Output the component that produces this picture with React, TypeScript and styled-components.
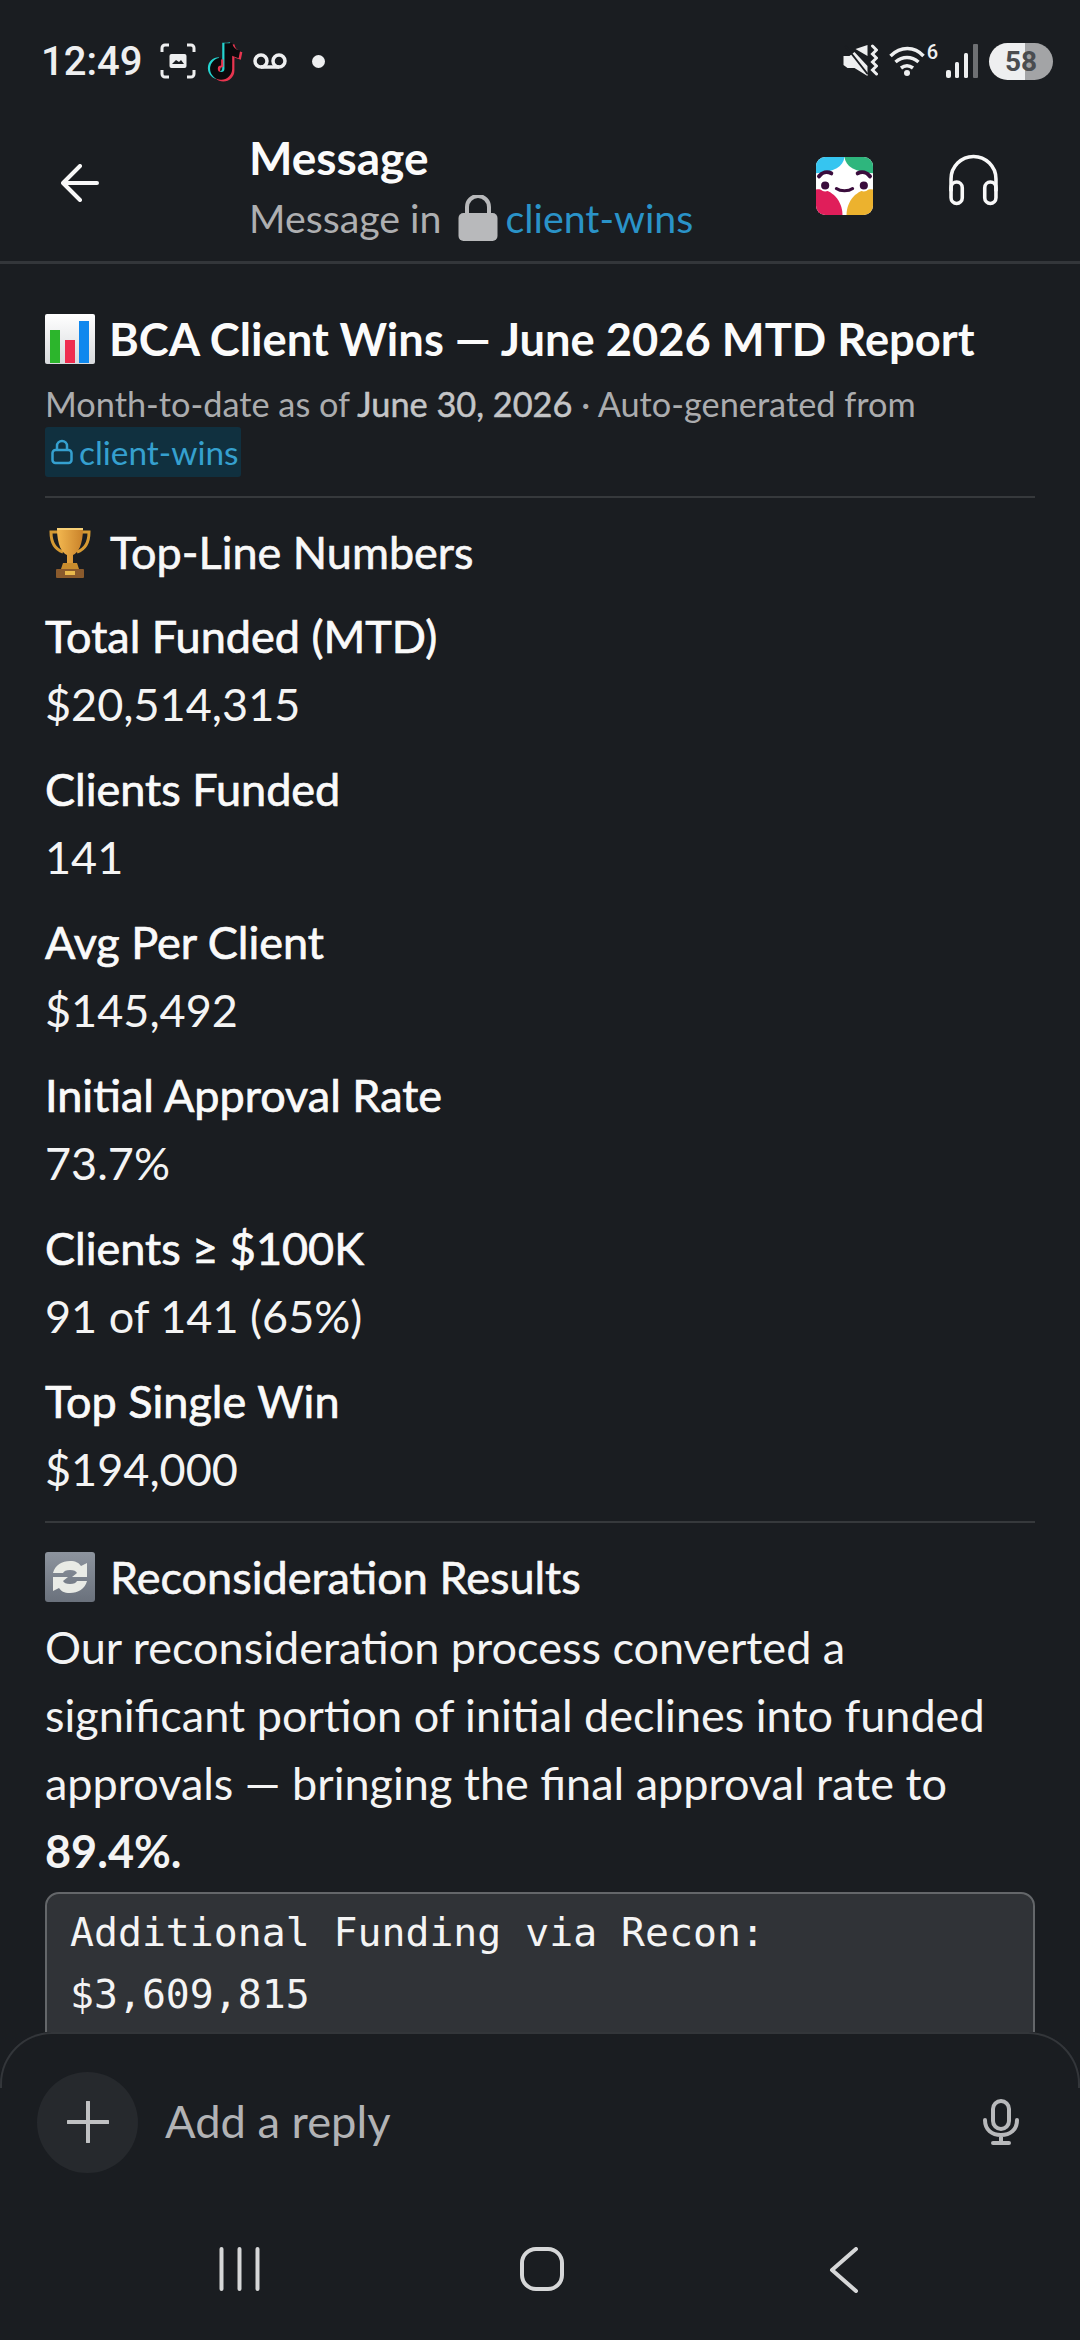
import React from 'react';
import styled, { createGlobalStyle } from 'styled-components';

const GlobalStyle = createGlobalStyle`
  html, body {
    margin: 0;
    padding: 0;
    background: #1a1d21;
  }
  * {
    box-sizing: border-box;
  }
`;

const Page = styled.div`
  display: flex;
  flex-direction: column;
  width: 1080px;
  height: 2340px;
  overflow: hidden;
  background: #1a1d21;
  color: #f8f8f8;
  font-family: Lato, 'Liberation Sans', sans-serif;
  font-feature-settings: 'liga' 1;
`;

const StatusBar = styled.div`
  display: flex;
  justify-content: space-between;
  align-items: center;
  flex: none;
  height: 122px;
  padding: 0 27px 0 41px;
  color: #eeeff0;
`;

const StatusGroup = styled.div`
  display: flex;
  align-items: center;
`;

const WifiGroup = styled(StatusGroup)`
  height: 32px;
  margin-left: 10px;
`;

const Clock = styled.span`
  font-family: Roboto, sans-serif;
  font-size: 40px;
  font-weight: 500;
  margin-right: 18px;
`;

const Dot = styled.span`
  width: 13px;
  height: 13px;
  margin-left: 25px;
  border-radius: 50%;
  background: #eeeff0;
`;

const WifiLevel = styled.span`
  align-self: flex-start;
  margin: -3px 0 0 1px;
  font-family: Roboto, sans-serif;
  font-size: 20px;
  font-weight: 500;
  line-height: 20px;
`;

const Battery = styled.div`
  display: flex;
  align-items: center;
  justify-content: center;
  width: 64px;
  height: 37px;
  margin-left: 10px;
  border-radius: 19px;
  background: linear-gradient(90deg, #eeeff0 0 57%, #a3a4a6 57% 100%);
  color: #4a4c4f;
  font-family: Roboto, sans-serif;
  font-size: 28px;
  font-weight: 700;
`;

const StatusIcon = styled.svg<{ $left: number }>`
  flex: none;
  margin-left: ${(p) => p.$left}px;
`;

const Header = styled.header`
  display: flex;
  align-items: flex-start;
  flex: none;
  height: 142px;
  padding: 6px 82px 0 61px;
  border-bottom: 3px solid #33363a;
`;

const BackButton = styled.div`
  display: flex;
  flex: none;
  width: 188px;
  margin-top: 36px;
`;

const HeaderText = styled.div`
  flex: 1;
  display: flex;
  flex-direction: column;
`;

const HeaderTitle = styled.div`
  font-size: 46px;
  font-weight: 700;
  line-height: 60px;
  color: #fbfbfb;
`;

const HeaderSub = styled.div`
  display: flex;
  align-items: center;
  font-size: 39.3px;
  line-height: 60px;
  color: #aeafb1;
`;

const HeaderLink = styled.span`
  color: #2a93c8;
`;

const HeaderLock = styled.svg`
  margin: 0 7px 0 17px;
`;

const HeaderActions = styled.div`
  display: flex;
  align-items: flex-start;
  gap: 76px;
  margin-top: 26px;
`;

const FaceSlot = styled.div`
  display: flex;
  margin-top: 3px;
`;

const Content = styled.main`
  flex: 1;
  min-height: 0;
  overflow: hidden;
  padding: 45px 45px 0;
`;

const Title = styled.h1`
  display: flex;
  align-items: center;
  gap: 14px;
  margin: 0;
  font-size: 45.3px;
  font-weight: 700;
  line-height: 60px;
  color: #fbfbfb;
`;

const Meta = styled.div`
  margin-top: 12px;
  font-size: 34.3px;
  line-height: 46px;
  color: #abacae;
`;

const MetaStrong = styled.span`
  font-weight: 400;
  -webkit-text-stroke: 0.5px currentColor;
  color: #c4c5c7;
`;

const ChannelMention = styled.span`
  display: inline-flex;
  align-items: center;
  gap: 6px;
  height: 50px;
  padding: 0 2px 0 6px;
  border-radius: 3px;
  background: #10303f;
  color: #35a0cf;
  font-size: 33.4px;
`;

const Divider = styled.hr<{ $top: number }>`
  height: 2px;
  margin: ${(p) => p.$top}px 0 0;
  border: none;
  background: #36393c;
`;

const SectionTitle = styled.h2`
  display: flex;
  align-items: center;
  gap: 15px;
  margin: 24px 0 0;
  font-size: 45px;
  font-weight: 400;
  -webkit-text-stroke: 0.6px currentColor;
  line-height: 60px;
  color: #f8f8f8;
`;

const Field = styled.div`
  margin-top: 23px;
`;

const FieldLabel = styled.div`
  font-size: 45px;
  font-weight: 400;
  -webkit-text-stroke: 0.7px currentColor;
  line-height: 62px;
  color: #fafafa;
`;

const FieldValue = styled.div`
  margin-top: 6px;
  font-size: 45px;
  line-height: 62px;
  color: #f4f4f4;
`;

const Paragraph = styled.p`
  margin: 6px 0 0;
  font-size: 45px;
  line-height: 68px;
  color: #f4f4f4;
`;

const CodeBlock = styled.pre`
  margin: 7px 0 0;
  height: 300px;
  padding: 7px 23px;
  border: 2px solid #64676a;
  border-radius: 14px;
  background: #303337;
  color: #f4f4f4;
  font-family: 'DejaVu Sans Mono', monospace;
  font-size: 39.8px;
  line-height: 62px;
`;

const Composer = styled.div`
  position: relative;
  display: flex;
  align-items: center;
  flex: none;
  height: 178px;
  padding: 2px 61px 0 37px;
  border-radius: 52px 52px 0 0;
  background: #1a1d21;

  /* the outline only follows the top edge and the two corners */
  &::before {
    content: '';
    position: absolute;
    top: 0;
    left: 0;
    right: 0;
    height: 54px;
    border: 2px solid #33363a;
    border-bottom: none;
    border-radius: 52px 52px 0 0;
  }
`;

const PlusButton = styled.div`
  display: flex;
  align-items: center;
  justify-content: center;
  flex: none;
  width: 101px;
  height: 101px;
  border-radius: 50%;
  background: #26292d;
`;

const Placeholder = styled.div`
  flex: 1;
  margin: -3px 0 0 27px;
  font-size: 45.3px;
  color: #b2b3b5;
`;

const NavBar = styled.nav`
  display: flex;
  justify-content: space-between;
  align-items: flex-start;
  flex: none;
  height: 130px;
  padding: 37px 221px 0 218px;
`;

const NavHome = styled.svg`
  margin-right: 6px;
`;

const Emoji = styled.svg`
  flex: none;
`;

function ChartEmoji() {
  return (
    <Emoji width="50" height="50" viewBox="0 0 50 50">
      <defs>
        <linearGradient id="chartBg" x1="0" y1="0" x2="0" y2="1">
          <stop offset="0" stopColor="#ffffff" />
          <stop offset="1" stopColor="#d8dadd" />
        </linearGradient>
      </defs>
      <rect width="50" height="50" rx="2" fill="url(#chartBg)" />
      <rect x="5" y="16" width="10" height="33" fill="#2cb52c" />
      <rect x="20" y="26" width="10" height="23" fill="#ef2d50" />
      <rect x="34" y="7" width="10" height="42" fill="#0f88ee" />
    </Emoji>
  );
}

function TrophyEmoji() {
  return (
    <Emoji width="50" height="52" viewBox="0 0 50 52">
      <defs>
        <linearGradient id="cup" x1="0" y1="0" x2="1" y2="0">
          <stop offset="0" stopColor="#f3b850" />
          <stop offset="1" stopColor="#c9822a" />
        </linearGradient>
      </defs>
      <path d="M14 6H6c0 10 3 17 12 20M36 6h8c0 10-3 17-12 20" fill="none" stroke="#d69a33" strokeWidth="3" />
      <path d="M12 2h26c0 17-5 25-10 27v8h-6v-8C17 27 12 19 12 2z" fill="url(#cup)" />
      <path d="M12 2h26v2H12z" fill="#f8d077" />
      <path d="M18 37h14l2 6H16z" fill="#c98d2d" />
      <rect x="11" y="43" width="28" height="9" rx="1" fill="#8a5a2c" />
      <rect x="20" y="45" width="10" height="4" fill="#e9b94c" />
    </Emoji>
  );
}

function RefreshEmoji() {
  return (
    <Emoji width="50" height="50" viewBox="0 0 50 50">
      <defs>
        <linearGradient id="refreshBg" x1="0" y1="0" x2="0" y2="1">
          <stop offset="0" stopColor="#8d949e" />
          <stop offset="1" stopColor="#6a717c" />
        </linearGradient>
      </defs>
      <rect width="50" height="50" rx="3" fill="url(#refreshBg)" />
      <path d="M8 21c2-8 9-12 17-12 6 0 9 2 11 5l6-3v14H27l5-4c-1-2-3-3-7-3-4 0-6 1-7 3z" fill="#e9ebe6" />
      <path d="M42 29c-2 8-9 12-17 12-6 0-9-2-11-5l-6 3V25h15l-5 4c1 2 3 3 7 3 4 0 6-1 7-3z" fill="#e9ebe6" />
    </Emoji>
  );
}

function SlackFace() {
  return (
    <svg width="57" height="58" viewBox="0 0 56 57">
      <defs>
        <clipPath id="faceClip">
          <rect width="56" height="57" rx="9" />
        </clipPath>
      </defs>
      <g clipPath="url(#faceClip)">
        <rect width="56" height="57" fill="#ffffff" />
        <path d="M0 0h28C27 9 18 15 0 16z" fill="#36c5f0" />
        <path d="M56 0H28c1 9 10 15 28 16z" fill="#2eb67d" />
        <path d="M0 57V32c14-2 26 10 26 25z" fill="#e01e5a" />
        <path d="M56 57V32c-14-2-26 10-26 25z" fill="#ecb22e" />
        <path d="M3 19c3-4 8-5 12-3" fill="none" stroke="#3a0c3c" strokeWidth="4" strokeLinecap="round" />
        <path d="M53 19c-3-4-8-5-12-3" fill="none" stroke="#3a0c3c" strokeWidth="4" strokeLinecap="round" />
        <circle cx="9" cy="28" r="5" fill="#3a0c3c" stroke="#fff" strokeWidth="2" />
        <circle cx="47" cy="28" r="5" fill="#3a0c3c" stroke="#fff" strokeWidth="2" />
        <path d="M20 31c4 3 12 3 16 0" fill="none" stroke="#3a0c3c" strokeWidth="3" strokeLinecap="round" />
      </g>
    </svg>
  );
}

const noteD = 'M20 3v23a6.500 6.500 0 1 1-6.500-6.500M20 3c1 6 5 9 10 10';

function App(): React.ReactElement {
  return (
    <Page>
      <GlobalStyle />
      <StatusBar>
        <StatusGroup>
          <Clock>12:49</Clock>
          <svg width="36" height="36" viewBox="0 0 36 36" fill="none" stroke="#eeeff0" strokeWidth="3">
            <path d="M9 2H5a3 3 0 0 0-3 3v4M27 2h4a3 3 0 0 1 3 3v4M9 34H5a3 3 0 0 1-3-3v-4M27 34h4a3 3 0 0 0 3-3v-4" />
            <rect x="9.500" y="11" width="17" height="14" rx="2" fill="#eeeff0" stroke="none" />
            <path d="M12 21l4-4 3 2 2-2 3 4z" fill="#1a1d21" stroke="none" />
          </svg>
          <StatusIcon $left={10} width="38" height="42" viewBox="0 0 34 38" fill="none" strokeWidth="7">
            <path d={noteD} stroke="#25d4d0" transform="translate(-2 -0.500)" />
            <path d={noteD} stroke="#e8354f" transform="translate(2 1.500)" />
            <path d={noteD} stroke="#0a0a0c" />
          </StatusIcon>
          <StatusIcon $left={9} width="34" height="18" viewBox="0 0 34 18" fill="none" stroke="#eeeff0" strokeWidth="3.500">
            <circle cx="8" cy="9" r="6" />
            <circle cx="26" cy="9" r="6" />
            <path d="M8 15h18" />
          </StatusIcon>
          <Dot />
        </StatusGroup>
        <StatusGroup>
          <svg width="35" height="34" viewBox="0 0 34 34" fill="#eeeff0">
            <path d="M0 12h6l5-4 13 14v10L11 24H4l-4-3z" />
            <path d="M12 5l12-4v11z" />
            <path d="M2 2l22 28" stroke="#1a1d21" strokeWidth="2" />
            <path d="M29 2l4 4-4 4 4 4-4 4 4 4-4 4 4 4" fill="none" stroke="#eeeff0" strokeWidth="3" strokeLinecap="round" />
          </svg>
          <WifiGroup>
            <svg width="38" height="32" viewBox="0 0 36 32" fill="none" stroke="#eeeff0" strokeWidth="3.500">
              <path d="M1.500 11c10-10 24-10 33 0" />
              <path d="M6.500 17c7-6 16-6 23 0" />
              <path d="M12 23c4-3 8-3 12 0" />
              <circle cx="18" cy="28" r="3" fill="#eeeff0" stroke="none" />
            </svg>
            <WifiLevel>6</WifiLevel>
          </WifiGroup>
          <StatusIcon $left={8} width="33" height="34" viewBox="0 0 33 34">
            <rect x="0" y="26" width="5" height="8" rx="2" fill="#eeeff0" />
            <rect x="9" y="18" width="4" height="16" rx="1.500" fill="#eeeff0" />
            <rect x="18" y="9" width="4" height="25" rx="1.500" fill="#eeeff0" />
            <rect x="27" y="0" width="5" height="34" rx="1" fill="#6e7073" />
          </StatusIcon>
          <Battery>58</Battery>
        </StatusGroup>
      </StatusBar>

      <Header>
        <BackButton>
          <svg width="38" height="38" viewBox="0 0 38 38" fill="none" stroke="#f8f8f8" strokeWidth="4" strokeLinecap="round" strokeLinejoin="round">
            <path d="M36 19H3M19 2L2 19l17 17" />
          </svg>
        </BackButton>
        <HeaderText>
          <HeaderTitle>Message</HeaderTitle>
          <HeaderSub>
            Message in
            <HeaderLock width="40" height="46" viewBox="0 0 40 46">
              <path d="M9 20v-8a11 11 0 0 1 22 0v8" fill="none" stroke="#b8b9bb" strokeWidth="4" />
              <rect x="0.500" y="18" width="39" height="28" rx="5" fill="#b8b9bb" />
            </HeaderLock>
            <HeaderLink>client-wins</HeaderLink>
          </HeaderSub>
        </HeaderText>
        <HeaderActions>
          <FaceSlot>
            <SlackFace />
          </FaceSlot>
          <svg width="49" height="52" viewBox="0 0 48 50" fill="none" stroke="#f8f8f8" strokeWidth="3.500">
            <path d="M2 36V24a22 22 0 0 1 44 0v12" />
            <rect x="2" y="27" width="11" height="21" rx="5.500" />
            <rect x="35" y="27" width="11" height="21" rx="5.500" />
          </svg>
        </HeaderActions>
      </Header>

      <Content>
        <Title>
          <ChartEmoji />
          BCA Client Wins — June 2026 MTD Report
        </Title>
        <Meta>
          Month-to-date as of <MetaStrong>June 30, 2026</MetaStrong> · Auto-generated from
          <br />
          <ChannelMention>
            <svg width="22" height="26" viewBox="0 0 22 26" fill="none" stroke="#35a0cf" strokeWidth="2.500">
              <path d="M6 11V7a5 5 0 0 1 10 0v4" />
              <rect x="1.500" y="11" width="19" height="13" rx="3" />
            </svg>
            client-wins
          </ChannelMention>
        </Meta>
        <Divider $top={19} />
        <SectionTitle>
          <TrophyEmoji />
          Top-Line Numbers
        </SectionTitle>

        <Field>
          <FieldLabel>Total Funded (MTD)</FieldLabel>
          <FieldValue>$20,514,315</FieldValue>
        </Field>
        <Field>
          <FieldLabel>Clients Funded</FieldLabel>
          <FieldValue>141</FieldValue>
        </Field>
        <Field>
          <FieldLabel>Avg Per Client</FieldLabel>
          <FieldValue>$145,492</FieldValue>
        </Field>
        <Field>
          <FieldLabel>Initial Approval Rate</FieldLabel>
          <FieldValue>73.7%</FieldValue>
        </Field>
        <Field>
          <FieldLabel>Clients ≥ $100K</FieldLabel>
          <FieldValue>91 of 141 (65%)</FieldValue>
        </Field>
        <Field>
          <FieldLabel>Top Single Win</FieldLabel>
          <FieldValue>$194,000</FieldValue>
        </Field>

        <Divider $top={21} />
        <SectionTitle>
          <RefreshEmoji />
          Reconsideration Results
        </SectionTitle>
        <Paragraph>
          Our reconsideration process converted a significant portion of initial declines into funded
          approvals — bringing the final approval rate to <strong>89.4%.</strong>
        </Paragraph>
        <CodeBlock>
          {'Additional Funding via Recon:\n$3,609,815'}
        </CodeBlock>
      </Content>

      <Composer>
        <PlusButton>
          <svg width="42" height="42" viewBox="0 0 42 42" stroke="#c0c1c3" strokeWidth="4" strokeLinecap="round">
            <path d="M21 1v40M1 21h40" />
          </svg>
        </PlusButton>
        <Placeholder>Add a reply</Placeholder>
        <svg width="36" height="46" viewBox="0 0 36 46" fill="none" stroke="#b8b9bb" strokeWidth="4" strokeLinecap="round">
          <rect x="10" y="2" width="16" height="28" rx="8" />
          <path d="M2 21c0 10 7 15 16 15s16-5 16-15M18 36v8M10 44h16" />
        </svg>
      </Composer>

      <NavBar>
        <svg width="43" height="44" viewBox="0 0 42 44" stroke="#d6d7d8" strokeWidth="4" strokeLinecap="round">
          <path d="M3 2v40M21 2v40M39 2v40" />
        </svg>
        <NavHome width="44" height="44" viewBox="0 0 44 44" fill="none" stroke="#d6d7d8" strokeWidth="4">
          <rect x="2" y="2" width="40" height="40" rx="14" />
        </NavHome>
        <svg width="30" height="46" viewBox="0 0 30 46" fill="none" stroke="#d6d7d8" strokeWidth="4" strokeLinecap="round" strokeLinejoin="round">
          <path d="M27 2L3 23l24 21" />
        </svg>
      </NavBar>
    </Page>
  );
}

export default App;
